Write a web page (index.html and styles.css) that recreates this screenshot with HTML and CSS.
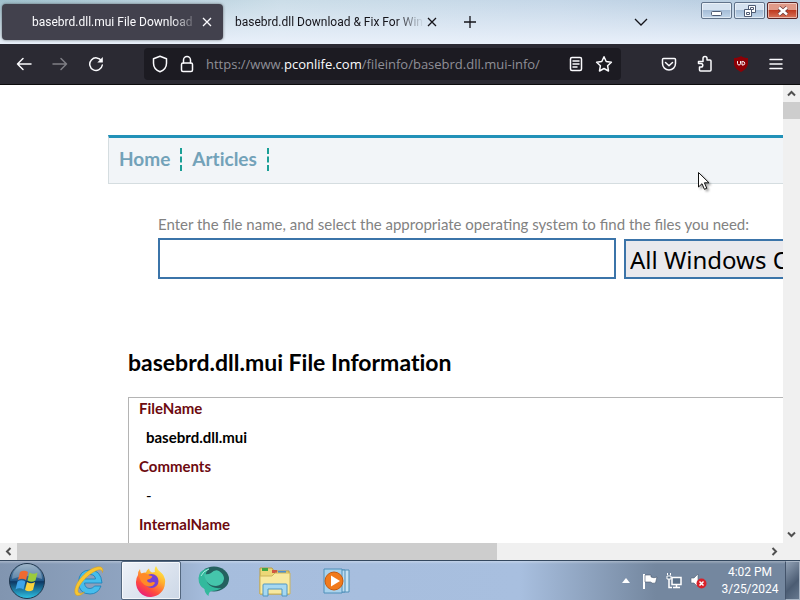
FILE: index.html
```html
<!DOCTYPE html>
<html lang="en">
<head>
    <meta charset="UTF-8">
    <meta name="viewport" content="width=device-width, initial-scale=1.0">
    <title>basebrd.dll.mui File Download</title>
    <link rel="stylesheet" href="styles.css">
</head>
<body>

    <!-- Tabs and window buttons -->
    <header class="tabbar">
        <div class="tab active">
            <span class="tab-title">basebrd.dll.mui File Download</span>
            <button class="tab-close" aria-label="Close tab"><svg width="10" height="10" viewBox="0 0 10 10"><path d="M1 1l8 8M9 1l-8 8"/></svg></button>
        </div>
        <div class="tab">
            <span class="tab-title">basebrd.dll Download &amp; Fix For Win</span>
            <button class="tab-close" aria-label="Close tab"><svg width="10" height="10" viewBox="0 0 10 10"><path d="M1 1l8 8M9 1l-8 8"/></svg></button>
        </div>
        <button class="new-tab" aria-label="New tab"><svg width="12" height="12" viewBox="0 0 12 12"><path d="M6 0v12M0 6h12"/></svg></button>
        <button class="all-tabs" aria-label="List all tabs"><svg width="14" height="8" viewBox="0 0 14 8"><path d="M1 1l6 6 6-6"/></svg></button>
        <div class="window-buttons">
            <button aria-label="Minimize"><svg width="14" height="14" viewBox="0 0 14 14"><rect x="1.500" y="7.500" width="10" height="4" rx="1"/></svg></button>
            <button aria-label="Restore"><svg width="14" height="14" viewBox="0 0 14 14"><path d="M5.500 1.500h7v7h-7z"/><path d="M7.500 3.500h3v2h-3z"/><path d="M1.500 5.500h7v7h-7z"/><path d="M3.500 8.500h3v2h-3z"/></svg></button>
            <button class="close" aria-label="Close"><svg width="14" height="14" viewBox="0 0 14 14"><path class="outline" d="M3 3.500l8 7M11 3.500l-8 7"/><path class="cross" d="M3 3.500l8 7M11 3.500l-8 7"/></svg></button>
        </div>
    </header>

    <!-- Navigation toolbar -->
    <nav class="toolbar">
        <button aria-label="Back"><svg width="16" height="16" viewBox="0 0 16 16"><path d="M15 8H1.500M7 2.500L1.500 8 7 13.500"/></svg></button>
        <button aria-label="Forward" disabled><svg width="16" height="16" viewBox="0 0 16 16"><path d="M1 8h13.500M9 2.500L14.500 8 9 13.500"/></svg></button>
        <button aria-label="Reload"><svg width="16" height="16" viewBox="0 0 16 16"><path d="M13.500 5A6.300 6.300 0 1 0 14.300 9"/><path d="M14.800 1v5.500H9.300z" fill="#fbfbfe" stroke="none"/></svg></button>
        <div class="urlbar">
            <svg width="16" height="18" viewBox="0 0 16 18"><path d="M8 1.200l6.500 2.500v4.500c0 4-2.500 7-6.500 8.600C4 15.200 1.500 12.200 1.500 8.200V3.700z"/></svg>
            <svg width="14" height="18" viewBox="0 0 14 18"><rect x="1.500" y="8" width="11" height="8.500" rx="1.500"/><path d="M3.500 8V5a3.500 3.500 0 0 1 7 0v3"/></svg>
            <span class="url">https://www.<b>pconlife.com</b>/fileinfo/basebrd.dll.mui-info/</span>
            <button aria-label="Reader view"><svg width="14" height="16" viewBox="0 0 14 16"><rect x="1.500" y="1.500" width="11" height="13" rx="1.500"/><path d="M4 5h6M4 8h6M4 11h4"/></svg></button>
            <button aria-label="Bookmark"><svg width="18" height="18" viewBox="0 0 18 18"><path d="M9 1.800l2.200 4.700 5.200.7-3.800 3.500.9 5.300L9 13.500 4.500 16l.9-5.300-3.800-3.500 5.200-.7z"/></svg></button>
        </div>
        <div class="extensions">
            <button aria-label="Pocket"><svg width="16" height="16" viewBox="0 0 16 16"><path d="M2.500 2.500h11q1 0 1 1V7.500a6.500 6.500 0 0 1-13 0v-4q0-1 1-1zM4.500 6.500L8 9.800l3.500-3.300"/></svg></button>
            <button aria-label="Extensions"><svg width="16" height="18" viewBox="0 0 16 18"><path d="M6 5V3.500a2 2 0 0 1 4 0V5h3q1 0 1 1v9q0 1-1 1H3.500q-1 0-1-1v-3H4a1.800 1.800 0 0 0 0-3.600H1.500V6.500H6z"/></svg></button>
            <button aria-label="uBlock Origin"><svg width="16" height="18" viewBox="0 0 16 18"><path d="M8 1c2 1.500 4.500 2 7 2v5c0 4-3 7-7 9-4-2-7-5-7-9V3c2.500 0 5-.500 7-2z" fill="#8c0006" stroke="none"/><path d="M4.500 6.500v2q0 1.500 1.500 1.500t1.500-1.500v-2M9 6.500v3.500h1a1.700 1.700 0 0 0 0-3.500z" stroke-width="1"/></svg></button>
            <button aria-label="Menu"><svg width="14" height="14" viewBox="0 0 14 14"><path d="M1 2.500h12M1 7h12M1 11.500h12"/></svg></button>
        </div>
    </nav>

    <!-- Page with its scrollbars -->
    <div class="browser">
        <main class="page">
            <ul class="menu">
                <li><a href="#">Home</a></li>
                <li><a href="#">Articles</a></li>
            </ul>

            <form class="search">
                <label for="filename">Enter the file name, and select the appropriate operating system to find the files you need:</label>
                <div class="search-row">
                    <input type="text" id="filename">
                    <select aria-label="Operating system">
                        <option>All Windows OS</option>
                    </select>
                </div>
            </form>

            <section class="info">
                <h1>basebrd.dll.mui File Information</h1>
                <dl>
                    <dt>FileName</dt>
                    <dd><b>basebrd.dll.mui</b></dd>
                    <dt>Comments</dt>
                    <dd>-</dd>
                    <dt>InternalName</dt>
                </dl>
            </section>
        </main>
        <div class="scroll-y">
            <button aria-label="Scroll up"><svg width="9" height="7" viewBox="0 0 9 7"><path d="M1 5.500L4.500 2 8 5.500"/></svg></button>
            <div class="thumb"></div>
            <button class="end" aria-label="Scroll down"><svg width="9" height="7" viewBox="0 0 9 7"><path d="M1 1.500L4.500 5 8 1.500"/></svg></button>
        </div>
        <div class="scroll-x">
            <button aria-label="Scroll left"><svg width="7" height="9" viewBox="0 0 7 9"><path d="M5.500 1L2 4.500 5.500 8"/></svg></button>
            <div class="thumb"></div>
            <button class="end" aria-label="Scroll right"><svg width="7" height="9" viewBox="0 0 7 9"><path d="M1.500 1L5 4.500 1.500 8"/></svg></button>
        </div>
        <svg class="cursor" width="14" height="20" viewBox="0 0 14 20"><path d="M1.500 1.500v14.500l3.500-3.300 2.400 5.600 2.400-1-2.400-5.500h4.600z" fill="#fff" stroke="#111"/></svg>
    </div>

    <!-- Taskbar -->
    <footer class="taskbar">
        <button class="start" aria-label="Start">
            <svg width="38" height="38" viewBox="0 0 38 38">
                <defs>
                    <linearGradient id="orb" x1="0" y1="0" x2="0" y2="1"><stop offset="0" stop-color="#7e9cb6"/><stop offset=".48" stop-color="#24598a"/><stop offset=".52" stop-color="#0d3763"/><stop offset="1" stop-color="#2fc4e6"/></linearGradient>
                </defs>
                <circle cx="19" cy="19" r="17.500" fill="url(#orb)" stroke="#21384f"/>
                <path d="M4 17a15 15 0 0 1 30 0q-15-6-30 0z" fill="#fff" opacity=".25"/>
                <path d="M12 10q4-2.500 8 0l-2 8q-4-2.500-8 0z" fill="#ef6a31"/>
                <path d="M21.500 10.500q4 2.500 8 0l-2 8q-4 2.500-8 0z" fill="#9bcb3c"/>
                <path d="M9.500 19.500q4-2.500 8 0l-2 8q-4-2.500-8 0z" fill="#3fa4e8"/>
                <path d="M19 20q4 2.500 8 0l-2 8q-4 2.500-8 0z" fill="#fbd23c"/>
            </svg>
        </button>
        <button class="task" aria-label="Internet Explorer">
            <svg width="34" height="34" viewBox="0 0 34 34">
                <path d="M30 19H12.500q.5 5.500 5.500 5.500 3 0 4.500-2.500H29q-3 8-11 8Q7 30 6.500 18.500 7 6 18 6q11 0 12 13zM12.500 15h11q-.5-4.500-5.500-4.500T12.500 15z" fill="#46bdec" stroke="#167fb8" stroke-width=".8"/>
                <path d="M4 31C-1 25 10 8 23 3.500c6-2 9 0 7.500 5 0-3-3-3.500-7-1.500C13 12 3.500 25 6.500 28.500q2 2 6-.5-5 5-8.500 3z" fill="#f7c631" stroke="#d69b16" stroke-width=".5"/>
            </svg>
        </button>
        <button class="task running" aria-label="Firefox">
            <svg width="32" height="32" viewBox="0 0 32 32">
                <defs>
                    <linearGradient id="fox" x1=".8" y1="0" x2=".2" y2="1"><stop offset="0" stop-color="#fff24a"/><stop offset=".35" stop-color="#ffb02e"/><stop offset=".7" stop-color="#ff4b3d"/><stop offset="1" stop-color="#e31587"/></linearGradient>
                </defs>
                <path d="M5 4q0 3 1.500 4.500Q9 7 11 7.500 11.500 5 14 3.500q0 2.500 3 4l3-.5q-1-3 1-6 1.500 4.500 5.500 7 2.500 2 3 5 1 1.500.5 5A14.500 14.500 0 0 1 1 17q0-4 2-7 0-4 2-6z" fill="url(#fox)"/>
                <circle cx="16.500" cy="16" r="7" fill="#7542d5"/>
                <path d="M4 10q4-3 8-1 2 2 5 2 1 1-2 3-3 0-3 2 2 3 6 1 2 0 2 1-2 4-7 3.500Q5 19 4 10z" fill="#ff8a27"/>
            </svg>
        </button>
        <button class="task" aria-label="Messenger">
            <svg width="34" height="32" viewBox="0 0 34 32">
                <ellipse cx="18" cy="14" rx="15" ry="12.500" fill="#24615f"/>
                <path d="M13 3Q3 5 2.500 13q0 8 6 11 0 4 4 7 0-4 3-5 6 0 10-3-10 1-14-5Q7 10 13 3z" fill="#33b99d"/>
                <path d="M8 9q4 1 7-1 4-4 8-2 5 3 5 8-1 6-8 7Q10 21 8 9z" fill="#45c5ab"/>
                <path d="M5 11q2-5 8-7" fill="none" stroke="#a5f0df"/>
            </svg>
        </button>
        <button class="task" aria-label="Windows Explorer">
            <svg width="34" height="32" viewBox="0 0 34 32">
                <path d="M2 3h12l2 3h15v23H2z" fill="#ecd777" stroke="#b89b42"/>
                <path d="M4 3h6v3H4z" fill="#42a544"/><path d="M14 5h5v3h-5z" fill="#cf5741"/><path d="M20 6h8v3h-8z" fill="#4b8fce"/>
                <path d="M2 11h12l3-3h15v21H2z" fill="#f8e9a0" stroke="#cdb45b"/>
                <path d="M5 31V20q0-1 1-1h22q1 0 1 1v11h-5v-7H10v7z" fill="#a6d8f1" stroke="#5096c3"/>
            </svg>
        </button>
        <button class="task" aria-label="Media Player">
            <svg width="30" height="28" viewBox="0 0 30 28">
                <path d="M10 3h17v22H10z" fill="#c8e3f4" stroke="#4f8fb9"/>
                <path d="M6 3h17v22H6z" fill="#bddcf0" stroke="#4f8fb9"/>
                <path d="M2 2h18v24H2z" fill="#a9d2ec" stroke="#4f8fb9"/>
                <circle cx="12" cy="14" r="9" fill="#f17a1c" stroke="#c65a0e"/>
                <path d="M9 8.500v11l9-5.500z" fill="#fff"/>
            </svg>
        </button>
        <div class="tray">
            <svg width="8" height="5" viewBox="0 0 8 5"><path d="M4 0l4 5H0z" fill="#fff"/></svg>
            <svg width="16" height="16" viewBox="0 0 16 16"><path d="M2 1v15" stroke="#fff" stroke-width="2"/><path d="M3 2h6v2q3 1.500 6 0l-1.500 6q-3 1-5-1H3z" fill="#fff" stroke="#47566b" stroke-width=".6"/></svg>
            <svg width="16" height="16" viewBox="0 0 16 16" fill="none"><path d="M6 4.500h9v7H6z" fill="#5b7088" stroke="#fff" stroke-width="1.500"/><path d="M7 14.500h7M10.500 12v2.500M3 6v8.500h3" stroke="#fff" stroke-width="1.500"/><path d="M1 3h4v3H1zM1.500 0v2M4.500 0v2" fill="#5b7088" stroke="#fff"/></svg>
            <svg width="17" height="16" viewBox="0 0 17 16"><path d="M1 5h3l4-4v13l-4-4H1z" fill="#fff" stroke="#536176" stroke-width=".6"/><circle cx="11.500" cy="10.500" r="5" fill="#d9212a"/><path d="M9.500 8.500l4 4M13.500 8.500l-4 4" stroke="#fff" stroke-width="1.500"/></svg>
            <div class="clock">4:02 PM<br>3/25/2024</div>
        </div>
        <button class="show-desktop" aria-label="Show desktop"></button>
    </footer>

</body>
</html>
```

FILE: styles.css
```css
* {
    box-sizing: border-box;
}

body {
    margin: 0;
    height: 100vh;
    display: flex;
    flex-direction: column;
    overflow: hidden;
    font-family: "Noto Sans", sans-serif;
    background-color: #fff;
}

button {
    display: flex;
    align-items: center;
    justify-content: center;
    margin: 0;
    padding: 0;
    border: none;
    background: none;
}

svg {
    display: block;
    flex: none;
}

/* Tabs */
.tabbar {
    flex: none;
    display: flex;
    align-items: center;
    height: 44px;
    padding-left: 2px;
    font-family: Roboto, sans-serif;
    font-size: 12px;
    color: #15141a;
    background: linear-gradient(to bottom, rgba(255, 255, 255, 0) 0%, #e9f0fa 100%), linear-gradient(to right, #9fc0cd, #cbdde8 35%, #c5d7e8 70%, #b4cade);
}

.tabbar svg {
    fill: none;
    stroke: #15141a;
    stroke-width: 1.3;
}

.tab {
    display: flex;
    align-items: center;
    width: 221px;
    height: 36px;
    padding: 0 10px;
    border-radius: 4px;
}

.tab.active {
    padding-left: 30px;
    background-color: #42414d;
    color: #fbfbfe;
    box-shadow: 0 0 3px rgba(0, 0, 0, 0.5);
}

.tab.active svg {
    stroke: #fbfbfe;
}

.tab-title {
    flex: 1;
    overflow: hidden;
    line-height: 20px;
    white-space: nowrap;
    -webkit-mask-image: linear-gradient(to left, transparent, #000 28px);
    mask-image: linear-gradient(to left, transparent, #000 28px);
}

.tab-close {
    width: 12px;
    margin-left: 2px;
}

.tab:not(.active) {
    width: 217px;
    padding: 0 2px 0 12px;
}

.new-tab {
    width: 32px;
    height: 32px;
    margin-left: 14px;
}

.all-tabs {
    width: 32px;
    height: 32px;
    margin-left: auto;
    margin-right: 44px;
}

.window-buttons {
    align-self: flex-start;
    display: flex;
    gap: 2px;
    padding: 2px 2px 0 0;
}

.window-buttons button {
    width: 31px;
    height: 17px;
    border: 1px solid #61738a;
    border-radius: 2px;
    background: linear-gradient(to bottom, #d5e2f0 45%, #a5bdd7 50%, #c2d6ea);
    box-shadow: inset 0 0 0 1px rgba(255, 255, 255, 0.5);
}

.window-buttons .close {
    border-color: #5a2323;
    background: linear-gradient(to bottom, #e09a88 45%, #c03a20 50%, #d8745a);
}

.window-buttons svg {
    fill: #fff;
    stroke: #4e5b73;
    stroke-width: 1;
}

.window-buttons .outline {
    stroke: #6b3a3a;
    stroke-width: 4;
}

.window-buttons .cross {
    stroke: #fff;
    stroke-width: 2.5;
}

/* Toolbar */
.toolbar {
    flex: none;
    display: flex;
    align-items: center;
    height: 41px;
    padding: 0 17px 0 16px;
    gap: 20px;
    background-color: #2b2a33;
    border-bottom: 1px solid #0c0c0d;
}

.toolbar svg {
    fill: none;
    stroke: #fbfbfe;
    stroke-width: 1.5;
    stroke-linejoin: round;
    stroke-linecap: round;
}

.toolbar button:disabled {
    opacity: 0.4;
}

.urlbar {
    flex: 1;
    display: flex;
    align-items: center;
    gap: 12px;
    height: 32px;
    margin-left: 20px;
    margin-right: 20px;
    padding: 0 8px;
    border-radius: 4px;
    background-color: #1c1b22;
}

.url {
    flex: 1;
    font-family: "Open Sans", sans-serif;
    font-size: 13px;
    color: #8f8f97;
    white-space: nowrap;
    overflow: hidden;
}

.url b {
    font-weight: normal;
    color: #fbfbfe;
}

.extensions {
    display: flex;
    align-items: center;
    gap: 20px;
}

/* Page area */
.browser {
    flex: 1;
    min-height: 0;
    position: relative;
    display: grid;
    grid-template: minmax(0, 1fr) 17px / minmax(0, 1fr) 17px;
}

.page {
    overflow: hidden;
    padding: 50px 0 0 108px;
    font-family: Lato, sans-serif;
    font-size: 15px;
}

.menu {
    display: flex;
    align-items: center;
    height: 49px;
    margin: 0;
    padding: 0 0 2px;
    list-style: none;
    background-color: #f2f5f8;
    border-top: 3px solid #2191b8;
    border-left: 1px solid #d5dde0;
    border-bottom: 1px solid #d5dde0;
}

.menu li {
    padding: 0 10px;
    border-right: 2px dashed #1a9f96;
    line-height: 22px;
    font-variant-ligatures: none;
}

.menu a {
    font-size: 19px;
    font-weight: bold;
    color: #73a2b9;
    text-decoration: none;
}

.search {
    margin: 28px 0 0 50px;
    color: #828282;
}

.search label {
    display: block;
    margin-bottom: 2px;
    line-height: 24px;
    white-space: nowrap;
}

.search-row {
    display: flex;
    gap: 8px;
}

.search input {
    flex: none;
    width: 458px;
    height: 41px;
    border: 2px solid #3b74a9;
    background-color: #fff;
}

.search select {
    flex: none;
    width: 240px;
    height: 40px;
    margin-top: 1px;
    padding: 0 0 0 4px;
    appearance: none;
    border: 2px solid #3b74a9;
    border-radius: 0;
    font-family: "Noto Sans", sans-serif;
    font-size: 24px;
    color: #000;
    background-color: #e9e9ed;
}

.info {
    margin: 67px 0 0 20px;
}

.info h1 {
    margin: 0 0 19px;
    font-size: 23px;
    line-height: 32px;
    font-weight: bold;
    font-variant-ligatures: none;
}

.info dl {
    margin: 0;
    padding: 0 10px;
    height: 200px;
    line-height: 29px;
    border-top: 1px solid #b4b4b4;
    border-left: 1px solid #b4b4b4;
}

.info dt {
    color: #6d0a10;
    font-weight: bold;
}

.info dt:first-child {
    padding-bottom: 4px;
    line-height: 21px;
}

.info dd {
    margin: 0 0 0 7px;
}

/* Scrollbars */
.scroll-y,
.scroll-x {
    display: flex;
    background-color: #f0f0f0;
}

.scroll-y {
    flex-direction: column;
    grid-row: 1;
    grid-column: 2;
}

.scroll-x {
    grid-row: 2;
    grid-column: 1 / 3;
    padding-right: 17px;
}

.scroll-y button,
.scroll-x button {
    width: 17px;
    height: 17px;
}

.scroll-y svg,
.scroll-x svg {
    fill: none;
    stroke: #505050;
    stroke-width: 2;
}

.thumb {
    background-color: #cdcdcd;
}

.scroll-y .thumb {
    height: 17px;
}

.scroll-x .thumb {
    width: 480px;
}

.scroll-y .end {
    margin-top: auto;
}

.scroll-x .end {
    margin-left: auto;
}

.cursor {
    position: absolute;
    top: 86px;
    left: 697px;
    filter: drop-shadow(2px 2px 1px rgba(0, 0, 0, 0.35));
}

/* Taskbar */
.taskbar {
    flex: none;
    display: flex;
    align-items: stretch;
    height: 40px;
    border-top: 1px solid #34485f;
    background: linear-gradient(to bottom, rgba(255, 255, 255, 0.3), rgba(255, 255, 255, 0) 3px), linear-gradient(to right, #8195b0, #93a8c5 20%, #a6bddd 26%, #a8bfdf 65%, #74879f 82%, #74879f);
}

.start {
    width: 54px;
    margin-right: 5px;
}

.task {
    width: 60px;
    margin-right: 2px;
}

.running {
    border: 1px solid #53677f;
    border-radius: 2px;
    background: linear-gradient(135deg, #eef2f8, #ccd7e6);
    box-shadow: inset 0 0 0 1px rgba(255, 255, 255, 0.7);
}

.tray {
    display: flex;
    align-items: center;
    gap: 8px;
    margin-left: auto;
}

.tray svg:first-child {
    margin-right: 4px;
}

.clock {
    width: 70px;
    font-family: Roboto, sans-serif;
    font-size: 12px;
    line-height: 17px;
    text-align: center;
    color: #fff;
}

.show-desktop {
    width: 15px;
    border: 1px solid #a8b5c5;
    border-left-color: #43536a;
    background: linear-gradient(135deg, #91a1b5, #4b5c73 60%, #66788f);
}
```
